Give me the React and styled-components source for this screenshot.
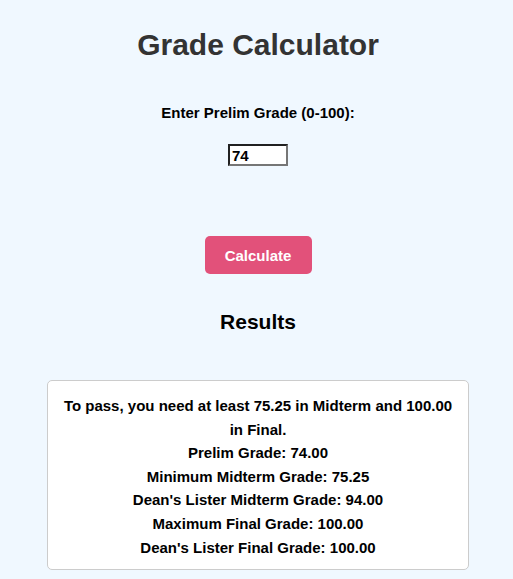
import React, { useState } from "react";
import styled, { createGlobalStyle } from "styled-components";

const GlobalStyle = createGlobalStyle`
  body {
    margin: 0;
    background: #f0f8ff;
    font-family: "Liberation Sans Narrow", "Liberation Sans", Arial, sans-serif;
    font-weight: bold;
    color: #000;
  }
`;

const Page = styled.div`
  display: flex;
  flex-direction: column;
  align-items: center;
  padding: 28px 7px 10px 10px;
`;

const Title = styled.h1`
  margin: 0;
  font-size: 30px;
  line-height: 34px;
  color: #333;
`;

const Label = styled.label`
  margin-top: 42px;
  font-size: 15px;
  line-height: 18px;
`;

const Input = styled.input`
  margin-top: 22px;
  width: 60px;
  height: 22px;
  box-sizing: border-box;
  padding: 0 2px;
  border: 2px inset #767676;
  font-family: inherit;
  font-weight: bold;
  font-size: 15px;
  background: #fff;
  outline: none;
`;

const Button = styled.button`
  margin-top: 70px;
  width: 107px;
  height: 38px;
  border: none;
  border-radius: 5px;
  background: #e2517a;
  color: #fff;
  font-family: inherit;
  font-weight: bold;
  font-size: 15px;
  cursor: pointer;
`;

const Subtitle = styled.h2`
  margin: 36px 0 0;
  font-size: 21px;
  line-height: 24px;
`;

const Card = styled.div`
  margin-top: 46px;
  width: 422px;
  box-sizing: border-box;
  padding: 13px 12px 10px;
  background: #fff;
  border: 1px solid #ccc;
  border-radius: 5px;
  text-align: center;
  font-size: 15px;
  line-height: 23.6px;
`;

const Line = styled.p`
  margin: 0;
`;

export default function App() {
  const [prelim, setPrelim] = useState("74");
  return (
    <>
      <GlobalStyle />
      <Page>
        <Title>Grade Calculator</Title>
        <Label htmlFor="prelim">Enter Prelim Grade (0-100):</Label>
        <Input id="prelim" value={prelim} onChange={(e) => setPrelim(e.target.value)} />
        <Button>Calculate</Button>
        <Subtitle>Results</Subtitle>
        <Card>
          <Line>To pass, you need at least 75.25 in Midterm and 100.00 in Final.</Line>
          <Line>Prelim Grade: 74.00</Line>
          <Line>Minimum Midterm Grade: 75.25</Line>
          <Line>Dean's Lister Midterm Grade: 94.00</Line>
          <Line>Maximum Final Grade: 100.00</Line>
          <Line>Dean's Lister Final Grade: 100.00</Line>
        </Card>
      </Page>
    </>
  );
}
